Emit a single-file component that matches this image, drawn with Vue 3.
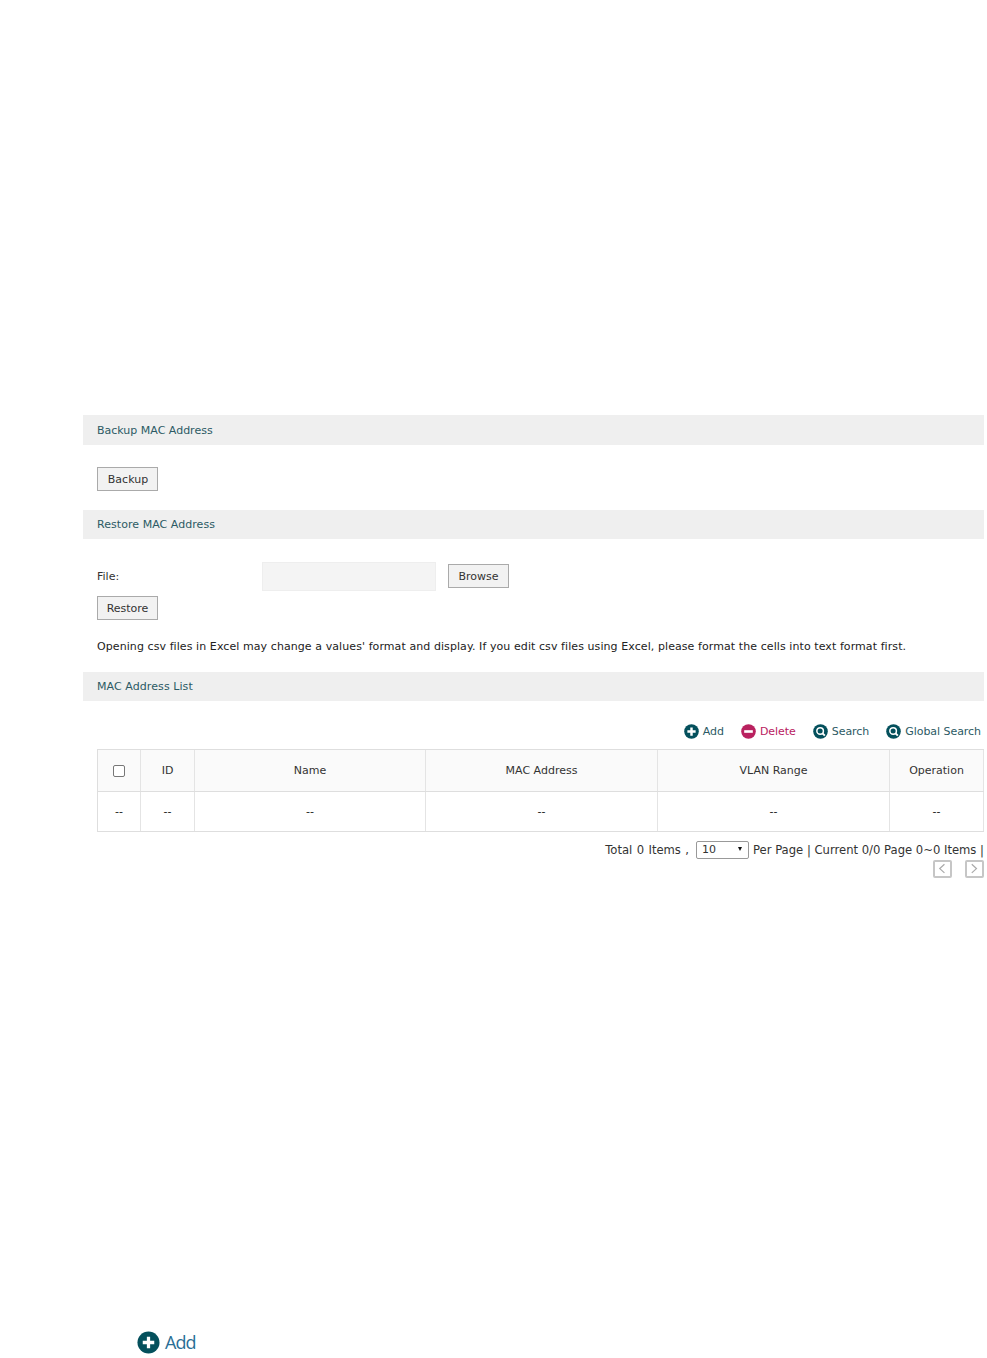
<script setup>
const columns = [
  { label: 'ID', width: 54 },
  { label: 'Name', width: 231 },
  { label: 'MAC Address', width: 232 },
  { label: 'VLAN Range', width: 232 },
  { label: 'Operation', width: 94 }
]
const tools = [
  { label: 'Add', kind: 'plus' },
  { label: 'Delete', kind: 'minus' },
  { label: 'Search', kind: 'search' },
  { label: 'Global Search', kind: 'search' }
]
</script>

<template>
  <main class="page">
    <section class="panel">
      <h2 class="bar bar-first">Backup MAC Address</h2>
      <div class="backup-body">
        <button class="btn btn-backup" type="button">Backup</button>
      </div>

      <h2 class="bar bar-restore">Restore MAC Address</h2>
      <div class="restore-body">
        <div class="file-row">
          <label class="file-label">File:</label>
          <div class="file-input"></div>
          <button class="btn btn-browse" type="button">Browse</button>
        </div>
        <button class="btn btn-restore" type="button">Restore</button>
        <p class="note">Opening csv files in Excel may change a values' format and display. If you edit csv files using Excel, please format the cells into text format first.</p>
      </div>

      <h2 class="bar bar-list">MAC Address List</h2>
      <div class="list-body">
        <div class="tools">
          <span v-for="t in tools" :key="t.label" class="tool" :class="{ danger: t.kind === 'minus' }">
            <svg class="tool-icon" viewBox="0 0 16 16" aria-hidden="true">
              <circle cx="8" cy="8" r="7.8" :fill="t.kind === 'minus' ? '#b9215f' : '#04505c'" />
              <path v-if="t.kind === 'plus'" d="M8 3.6v8.8M3.6 8h8.8" stroke="#fff" stroke-width="2.6" />
              <path v-else-if="t.kind === 'minus'" d="M3.4 8h9.2" stroke="#fff" stroke-width="2.8" />
              <g v-else fill="none" stroke="#fff">
                <circle cx="7.6" cy="7.4" r="3.5" stroke-width="1.6" />
                <path d="M10.2 10l2.4 2.4" stroke-width="2" />
              </g>
            </svg>
            <span class="tool-label">{{ t.label }}</span>
          </span>
        </div>

        <div class="table">
          <div class="row head">
            <div class="cell check-cell"><span class="checkbox"></span></div>
            <div v-for="c in columns" :key="c.label" class="cell" :style="{ width: c.width + 'px' }">{{ c.label }}</div>
          </div>
          <div class="row data">
            <div class="cell check-cell">--</div>
            <div v-for="c in columns" :key="c.label" class="cell" :style="{ width: c.width + 'px' }">--</div>
          </div>
        </div>

        <div class="pager">
          <span class="pager-total">Total 0 Items ,</span>
          <span class="select">10<i class="caret"></i></span>
          <span>Per Page | Current 0/0 Page 0~0 Items |</span>
        </div>
        <div class="pager-arrows">
          <span class="arrow">
            <svg viewBox="0 0 18 18" aria-hidden="true"><path d="M11.5 3L5.5 8.5l6 5.5" /></svg>
          </span>
          <span class="arrow">
            <svg viewBox="0 0 18 18" aria-hidden="true"><path d="M5.5 3l6 5.5-6 5.5" /></svg>
          </span>
        </div>
      </div>
    </section>

    <div class="big-add">
      <svg class="big-icon" viewBox="0 0 24 24" aria-hidden="true">
        <circle cx="12" cy="12" r="11.5" fill="#04505c" />
        <path d="M12 6v12M6 12h12" stroke="#fff" stroke-width="3.4" />
      </svg>
      <span>Add</span>
    </div>
  </main>
</template>

<style>
html, body { margin: 0; background: #fff; }
</style>

<style scoped>
.page {
  width: 987px;
  height: 1358px;
  overflow: hidden;
  padding-top: 415px;
  box-sizing: border-box;
  font-family: "DejaVu Sans", Verdana, sans-serif;
  font-size: 11px;
  color: #333;
}
.panel { margin-left: 83px; width: 901px; }
.bar {
  margin: 0;
  padding-left: 14px;
  background: #efefef;
  font-size: 11px;
  font-weight: 400;
  color: #2c5a64;
  display: flex;
  align-items: center;
}
.bar-first { height: 30px; }
.bar-restore { height: 29px; letter-spacing: 0.05px; }
.bar-list { height: 29px; letter-spacing: 0.08px; }
.btn {
  display: block;
  box-sizing: border-box;
  width: 61px;
  height: 24px;
  padding: 0;
  border: 1px solid #aaa;
  background: #f2f2f2;
  font: inherit;
  color: #333;
}
.btn-backup { padding-left: 1px; }
.backup-body { padding: 22px 14px 19px; }
.restore-body { padding: 22px 14px 0; height: 133px; box-sizing: border-box; }
.file-row { display: flex; align-items: center; height: 30px; }
.file-label { width: 165px; }
.file-input {
  width: 174px;
  height: 29px;
  box-sizing: border-box;
  background: #f4f4f4;
  border: 1px solid #eee;
  margin-right: 12px;
}
.btn-restore { margin-top: 5px; }
.note { margin: 20px 0 0; color: #222; line-height: 14px; white-space: nowrap; letter-spacing: 0.08px; }
.list-body { padding: 20px 0 0 14px; }
.tools {
  display: flex;
  justify-content: flex-end;
  gap: 17px;
  height: 28px;
  align-items: flex-start;
  padding-right: 3px;
  color: #2c5a64;
  letter-spacing: -0.05px;
  line-height: 20px;
}
.tool { display: inline-flex; align-items: center; gap: 4px; height: 20px; }
.tool-label { padding-top: 1px; }
.danger { color: #b9215f; }
.tool-icon { width: 15px; height: 15px; }
.table {
  border: solid #dedede;
  border-width: 1px 0 1px 1px;
  width: 887px;
  box-sizing: border-box;
}
.row { display: flex; }
.head { height: 41px; background: #fafafa; border-bottom: 1px solid #dedede; }
.data { height: 39px; color: #222; }
.cell {
  box-sizing: border-box;
  display: flex;
  align-items: center;
  justify-content: center;
  border-right: 1px solid #e4e4e4;
}
.check-cell { width: 43px; }
.checkbox {
  width: 10px;
  height: 10px;
  border: 1px solid #777;
  border-radius: 2px;
  background: #fff;
}
.pager {
  display: flex;
  justify-content: flex-end;
  align-items: center;
  gap: 4px;
  height: 20px;
  margin-top: 8px;
  font-size: 11.6px;
  color: #333;
  white-space: nowrap;
}
.pager-total { margin-right: 3px; word-spacing: 0.7px; }
.select {
  position: relative;
  box-sizing: border-box;
  width: 53px;
  height: 18px;
  border: 1px solid #999;
  border-radius: 2px;
  padding-left: 5px;
  font-size: 11px;
  line-height: 15px;
  background: #fff;
}
.caret {
  position: absolute;
  right: 6px;
  top: 5px;
  border: solid transparent;
  border-width: 4px 2.5px 0;
  border-top-color: #111;
}
.pager-arrows { display: flex; justify-content: flex-end; gap: 13px; }
.arrow {
  box-sizing: border-box;
  width: 19px;
  height: 18px;
  border: 2px solid #c6c6c6;
  border-radius: 2px;
  display: block;
}
.arrow svg { display: block; width: 15px; height: 14px; fill: none; stroke: #aaa; stroke-width: 1.6; }
.big-add {
  position: absolute;
  left: 137px;
  top: 1330px;
  display: flex;
  align-items: center;
  gap: 5px;
  font-family: "Open Sans", sans-serif;
  font-size: 18px;
  letter-spacing: -1px;
  color: #2a6f96;
  line-height: 24px;
}
.big-icon { width: 23px; height: 23px; }
</style>
